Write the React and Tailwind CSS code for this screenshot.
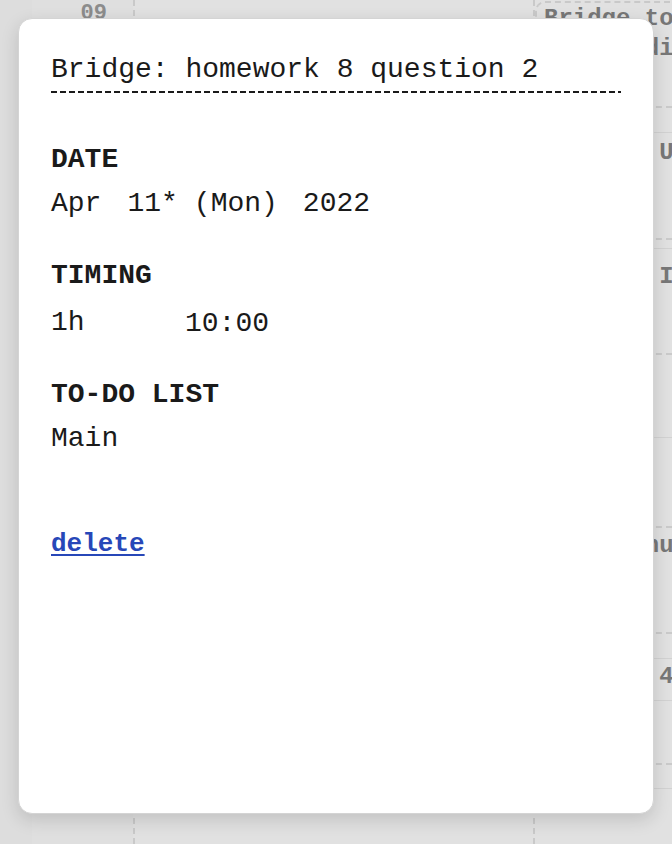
import React from 'react';

const mono = "font-['Liberation_Mono','Courier_New',monospace]";

// right-hand column of the calendar behind the dialog
const segments = [
  { h: 106, line: 'none', card: true },
  { h: 26, line: 'dashed' },
  { h: 106, line: 'solid', text: 'Review: Units', pt: 5 },
  { h: 10, line: 'dashed' },
  { h: 105, line: 'solid', text: 'Chapter II', pt: 13 },
  { h: 84, line: 'dashed' },
  { h: 89, line: 'solid' },
  { h: 106, line: 'dashed', text: 'Read manual', pt: 3 },
  { h: 26, line: 'dashed' },
  { h: 42, line: 'solid', text: 'Lecture 4', pt: 3 },
  { h: 63, line: 'solid' },
  { h: 25, line: 'dashed' },
  { h: 60, line: 'solid' },
];

function Segment({ seg }) {
  if (seg.card) {
    return (
      <div className="h-[106px] pt-[1px]">
        <div className="h-full rounded-tl-[10px] border-t-2 border-l-2 border-dashed border-[#c9c9c9] pl-[7px] pt-[1px] text-[24px] font-bold leading-[30px] text-[#777] whitespace-nowrap overflow-hidden">
          <div>Bridge to</div>
          <div>and bidding</div>
        </div>
      </div>
    );
  }
  const border =
    seg.line === 'dashed'
      ? 'border-t-2 border-dashed border-[#cacaca]'
      : 'border-t border-[#d2d2d2]';
  return (
    <div
      className={`${border} pl-[9px] text-[24px] font-bold leading-[30px] text-[#777] whitespace-nowrap overflow-hidden`}
      style={{ height: seg.h, paddingTop: seg.pt || 0 }}
    >
      {seg.text}
    </div>
  );
}

function Background() {
  return (
    <div className={`flex h-[844px] w-[672px] overflow-hidden bg-[#dedede] ${mono}`}>
      <div className="w-[32px] shrink-0 bg-[#dddddd]" />
      <div className="w-[101px] shrink-0 bg-[#dfdfdf] pr-[26px] text-right">
        <div className="mt-[3px] text-[22px] font-bold leading-none text-[#8c8c8c]">09</div>
      </div>
      <div className="w-[400px] shrink-0 border-l-2 border-dashed border-[#c9c9c9] bg-[#e1e1e1]" />
      <div className="min-w-0 flex-1 border-l-2 border-dashed border-[#c9c9c9] bg-[#e1e1e1]">
        {segments.map((seg, i) => (
          <Segment key={i} seg={seg} />
        ))}
      </div>
    </div>
  );
}

export default function App() {
  return (
    <div className="relative h-[844px] w-[672px] overflow-hidden">
      <Background />

      {/* event dialog */}
      <div
        className={`absolute left-[18px] top-[18px] h-[796px] w-[636px] rounded-[14px] border border-[#d4d4d4] bg-white px-[32px] pt-[33px] text-[28px] text-[#1a1a1a] shadow-[0_6px_18px_rgba(0,0,0,0.14)] ${mono}`}
      >
        <div className="leading-[36px]">Bridge: homework 8 question 2</div>
        <div className="mt-[3px] h-[2px] bg-[linear-gradient(to_right,#1a1a1a_0,#1a1a1a_6px,transparent_6px,transparent_9px)] bg-[length:9px_2px] bg-repeat-x" />

        <div className="mt-[45px]">
          <div className="font-bold leading-[44px]">DATE</div>
          <div className="flex leading-[44px]">
            <span className="mr-[26px]">Apr</span>
            <span className="mr-[16px]">11*</span>
            <span className="mr-[25px]">(Mon)</span>
            <span>2022</span>
          </div>
        </div>

        <div className="mt-[28px]">
          <div className="font-bold leading-[44px]">TIMING</div>
          <div className="flex h-[47px] pt-[3px] leading-[44px]">
            <span className="w-[134px]">1h</span>
            <span className="pt-[1px]">10:00</span>
          </div>
        </div>

        <div className="mt-[28px]">
          <div className="font-bold leading-[44px]">TO-DO LIST</div>
          <div className="leading-[44px]">Main</div>
        </div>

        <div className="mt-[61px] text-[26px] leading-[44px]">
          <a href="#" className="font-bold text-[#2747b8] underline underline-offset-[3px]">
            delete
          </a>
        </div>
      </div>
    </div>
  );
}
